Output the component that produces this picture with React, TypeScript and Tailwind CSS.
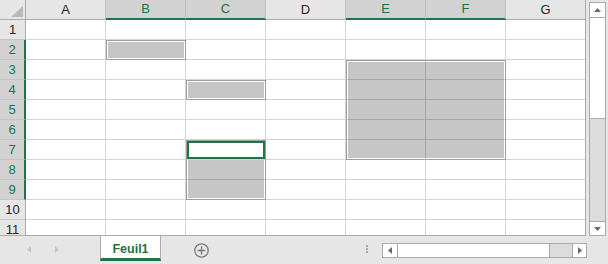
import { Fragment } from 'react';

const COLS = ['A', 'B', 'C', 'D', 'E', 'F', 'G'];
const ACTIVE_COLS = ['B', 'C', 'E', 'F'];
const ROWS = [1, 2, 3, 4, 5, 6, 7, 8, 9, 10, 11];

function ColHeader({ c }: { c: string }) {
  const last = c === 'G';
  if (ACTIVE_COLS.includes(c)) {
    return (
      <div className="flex items-center justify-center bg-[#d2d2d2] border-r border-r-[#bdbdbd] border-b-2 border-b-[#217346] text-[#217346]">
        {c}
      </div>
    );
  }
  return (
    <div
      className={
        last
          ? 'flex items-center justify-center bg-[#e6e6e6] border-b border-b-[#ababab] text-[#262626]'
          : 'flex items-center justify-center bg-[#e6e6e6] border-r border-r-[#bdbdbd] border-b border-b-[#ababab] text-[#262626]'
      }
    >
      {c}
    </div>
  );
}

function RowHeader({ r }: { r: number }) {
  const active = r >= 2 && r <= 9;
  return (
    <div
      className={
        active
          ? 'flex items-center justify-center bg-[#d2d2d2] border-r-2 border-r-[#217346] border-b border-b-[#c4c4c4] text-[#217346]'
          : 'flex items-center justify-center bg-[#e6e6e6] border-r border-r-[#ababab] border-b border-b-[#c4c4c4] text-[#262626]'
      }
    >
      {r}
    </div>
  );
}

function Sel({ className }: { className: string }) {
  return (
    <div className={`${className} border border-[#9e9e9e] p-px`}>
      <div className="h-full bg-[rgba(0,0,0,0.224)]" />
    </div>
  );
}

export default function App() {
  return (
    <div className="w-[608px] h-[264px] overflow-hidden bg-[#e6e6e6] font-['Liberation_Sans',Arial,sans-serif] text-[13px] select-none">
      <div className="flex h-[236px]">
        {/* sheet */}
        <div className="grid w-[586px] h-[236px] overflow-hidden border-r border-b border-[#ababab]">
          <div className="col-start-1 row-start-1 grid grid-cols-[26px_repeat(6,80px)_79px] auto-rows-[20px]">
            <div className="flex items-end justify-end pr-[2px] pb-[2px] bg-[#e6e6e6] border-r border-b border-[#ababab]">
              <svg width="12" height="11" viewBox="0 0 12 11">
                <polygon points="0,11 12,11 12,0" fill="#b9b9b9" />
              </svg>
            </div>
            {COLS.map((c) => (
              <ColHeader key={c} c={c} />
            ))}
            {ROWS.map((r) => (
              <Fragment key={r}>
                <RowHeader r={r} />
                {COLS.map((c) => (
                  <div
                    key={c}
                    className={c === 'G' ? 'bg-white border-b border-[#d4d4d4]' : 'bg-white border-r border-b border-[#d4d4d4]'}
                  />
                ))}
              </Fragment>
            ))}
          </div>

          {/* selected ranges */}
          <div className="col-start-1 row-start-1 grid grid-cols-[26px_repeat(6,80px)_79px] grid-rows-[repeat(12,20px)] pointer-events-none">
            <Sel className="col-start-3 row-start-3" />
            <Sel className="col-start-4 row-start-5" />
            <Sel className="col-start-6 col-span-2 row-start-4 row-span-5" />
            <div className="col-start-4 row-start-8 row-span-3 border border-[#9e9e9e] flex flex-col">
              <div className="h-[18px] bg-white border-2 border-[#217346]" />
              <div className="flex-1 m-px bg-[rgba(0,0,0,0.224)]" />
            </div>
          </div>
        </div>

        {/* vertical scrollbar */}
        <div className="flex-1 pl-[3px] pt-[2px]">
          <div className="w-[17px] h-[234px] border border-[#ababab] bg-[#dcdcdc] flex flex-col">
            <div className="h-[15px] bg-white border-b border-[#ababab] flex items-center justify-center">
              <svg width="7" height="4" viewBox="0 0 7 4">
                <polygon points="0,4 7,4 3.5,0" fill="#6a6a6a" />
              </svg>
            </div>
            <div className="h-[101px] bg-white border-b border-[#ababab]" />
            <div className="flex-1" />
            <div className="h-[14px] bg-white border-t border-[#ababab] flex items-center justify-center">
              <svg width="7" height="4" viewBox="0 0 7 4">
                <polygon points="0,0 7,0 3.5,4" fill="#6a6a6a" />
              </svg>
            </div>
          </div>
        </div>
      </div>

      {/* sheet tabs bar */}
      <div className="flex items-start h-[28px]">
        <div className="w-[100px] h-[26px] flex items-center pl-[27px] gap-[24px]">
          <svg width="4" height="7" viewBox="0 0 4 7">
            <polygon points="4,0 4,7 0,3.5" fill="#c6c6c6" />
          </svg>
          <svg width="4" height="7" viewBox="0 0 4 7">
            <polygon points="0,0 0,7 4,3.5" fill="#c6c6c6" />
          </svg>
        </div>
        <div className="w-[61px] h-[25px] bg-white border-x border-[#ababab] border-b-[3px] border-b-[#217346] flex justify-center pt-[4px] text-[12.5px] font-bold text-[#217346]">
          Feuil1
        </div>
        <svg className="ml-[33px] mt-[7px]" width="15" height="15" viewBox="0 0 15 15">
          <circle cx="7.5" cy="7.5" r="6.7" fill="none" stroke="#7b7b7b" strokeWidth="1.3" />
          <path d="M7.5 3.6V11.4M3.6 7.5H11.4" stroke="#7b7b7b" strokeWidth="1.4" />
        </svg>
        <div className="ml-[157px] mt-[9px] flex flex-col gap-px">
          <div className="w-[2px] h-[2px] bg-[#a8a8a8]" />
          <div className="w-[2px] h-[2px] bg-[#a8a8a8]" />
          <div className="w-[2px] h-[2px] bg-[#a8a8a8]" />
        </div>
        <div className="ml-[14px] mt-[7px] w-[205px] h-[15px] border border-[#ababab] bg-[#dcdcdc] flex">
          <div className="w-[15px] bg-white border-r border-[#ababab] flex items-center justify-center">
            <svg width="4" height="7" viewBox="0 0 4 7">
              <polygon points="4,0 4,7 0,3.5" fill="#6a6a6a" />
            </svg>
          </div>
          <div className="w-[152px] bg-white border-r border-[#ababab]" />
          <div className="flex-1" />
          <div className="w-[14px] bg-white border-l border-[#ababab] flex items-center justify-center">
            <svg width="4" height="7" viewBox="0 0 4 7">
              <polygon points="0,0 0,7 4,3.5" fill="#6a6a6a" />
            </svg>
          </div>
        </div>
      </div>
    </div>
  );
}
